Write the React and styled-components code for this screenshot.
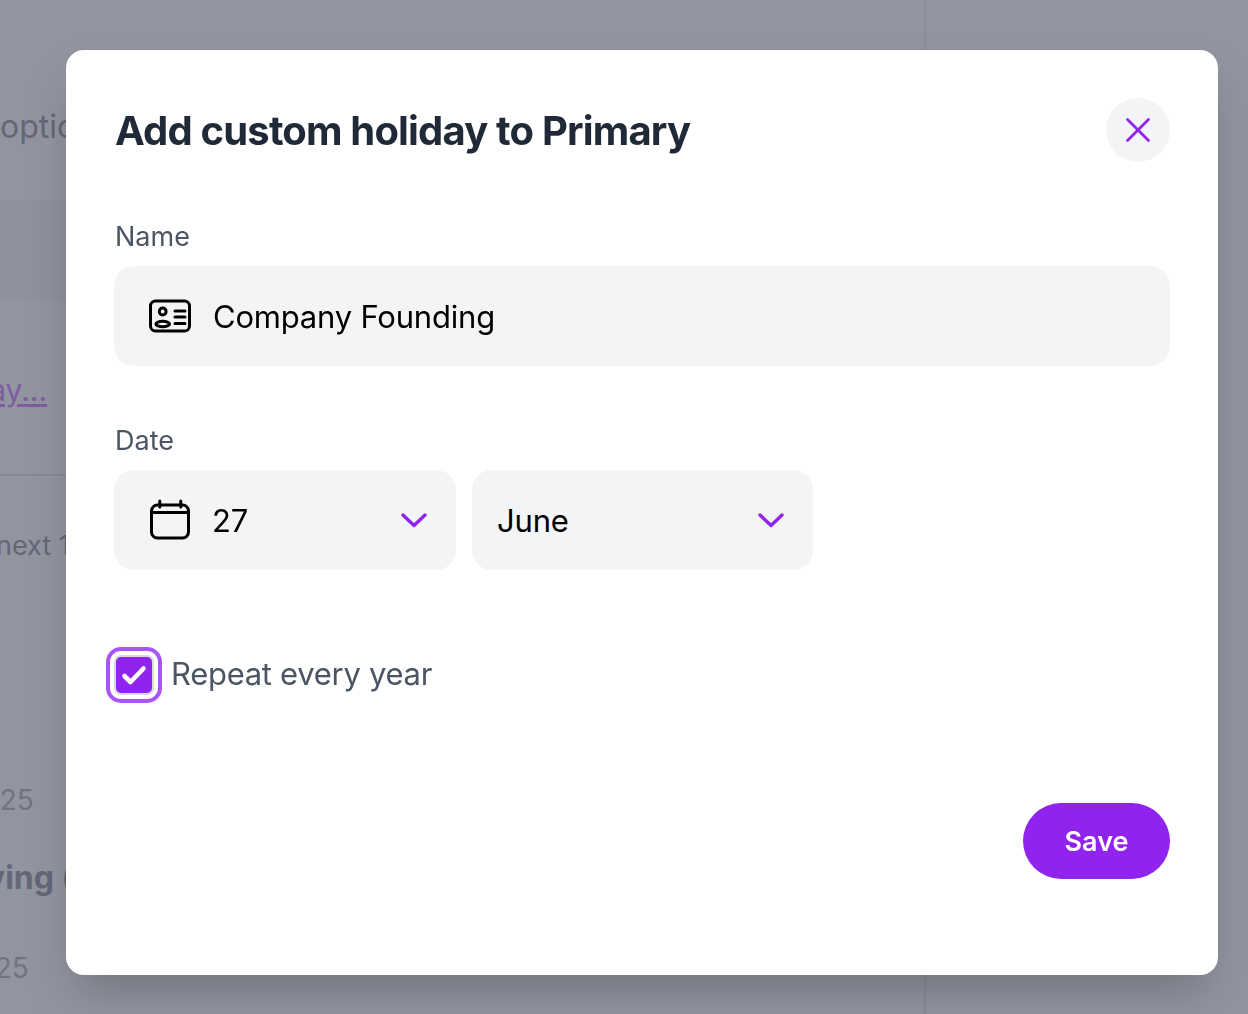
import styled, { createGlobalStyle } from "styled-components";

const GlobalStyle = createGlobalStyle`
  html, body {
    margin: 0;
    height: 100%;
    overflow: hidden;
    background: #fff;
    font-family: Inter, "Liberation Sans", sans-serif;
  }
`;

// page behind the dialog
const Page = styled.div`
  display: flex;
  height: 1014px;
  overflow: hidden;
`;

const Main = styled.main`
  width: 926px;
  box-sizing: border-box;
  flex-shrink: 0;
  border-right: 2px solid #ecedf0;
  overflow: hidden;
`;

const BgText = styled.div`
  height: ${(p) => p.$height}px;
  margin-top: ${(p) => p.$top}px;
  margin-left: ${(p) => p.$shift}px;
  display: flex;
  align-items: center;
  font-size: ${(p) => p.$size || 32}px;
  font-weight: ${(p) => p.$weight || 400};
  color: ${(p) => p.$color || "#a3a3ae"};
  white-space: nowrap;
`;

const BgLink = styled.a`
  color: #d28eff;
  text-decoration: underline;
  text-underline-offset: 3px;
`;

const Band = styled.div`
  height: 100px;
  background: #f8f8fa;
  margin-top: 47px;
`;

const Divider = styled.div`
  height: 2px;
  margin-top: 59px;
  background: #e6e8ec;
`;

// dimming layer
const Overlay = styled.div`
  position: fixed;
  inset: 0;
  background: rgba(37, 43, 66, 0.5);
  padding: 50px 30px 0 66px;
`;

const Modal = styled.div`
  width: 1152px;
  height: 925px;
  box-sizing: border-box;
  background: #fff;
  border-radius: 18px;
  box-shadow: 0 25px 50px -12px rgba(0, 0, 0, 0.25);
  padding: 48px;
  display: flex;
  flex-direction: column;
`;

const Header = styled.div`
  display: flex;
  align-items: center;
  justify-content: space-between;
  height: 64px;
  margin-bottom: 56px;
`;

const Title = styled.h2`
  margin: 0 0 0 1px;
  font-size: 40px;
  font-weight: 700;
  letter-spacing: -0.83px;
  color: #1f2937;
`;

const CloseButton = styled.button`
  width: 64px;
  height: 64px;
  border: 0;
  padding: 0;
  border-radius: 50%;
  background: #f3f4f6;
  display: flex;
  align-items: center;
  justify-content: center;
`;

const Label = styled.div`
  height: 36px;
  line-height: 38px;
  margin: 0 0 12px 1px;
  font-size: 27px;
  color: #4b5563;
`;

const NameField = styled.div`
  height: 100px;
  border-radius: 20px;
  background: #f3f4f6;
  display: flex;
  align-items: center;
  padding-left: 34px;
  gap: 21px;
  margin-bottom: 56px;
`;

const FieldText = styled.span`
  font-size: 31px;
  letter-spacing: -0.2px;
  color: #000;
`;

const DateRow = styled.div`
  display: flex;
  gap: 16px;
  margin-bottom: 85px;
`;

const SelectBox = styled.div`
  width: ${(p) => p.$width}px;
  height: 100px;
  box-sizing: border-box;
  border-radius: 20px;
  background: #f3f4f6;
  display: flex;
  align-items: center;
  gap: 21px;
  padding: 0 29px 0 ${(p) => p.$left}px;
`;

const Chevron = styled.svg`
  margin-left: auto;
`;

const CheckRow = styled.div`
  display: flex;
  align-items: center;
  height: 40px;
  gap: 17px;
`;

const CheckBox = styled.span`
  width: 40px;
  height: 40px;
  box-sizing: border-box;
  border: 2px solid #d8dae0;
  border-radius: 7px;
  background: #9123ee;
  box-shadow: 0 0 0 4px #fff, 0 0 0 8px #a855f7;
  display: flex;
  align-items: center;
  justify-content: center;
`;

const CheckLabel = styled.span`
  font-size: 31px;
  line-height: 38px;
  margin-bottom: 2px;
  letter-spacing: -0.3px;
  color: #4b5563;
`;

const Footer = styled.div`
  display: flex;
  justify-content: flex-end;
  margin-top: 108px;
`;

const SaveButton = styled.button`
  width: 147px;
  height: 76px;
  border: 0;
  border-radius: 38px;
  background: #9123ee;
  color: #fff;
  font-family: inherit;
  font-size: 27px;
  font-weight: 600;
`;

const IdIcon = () => (
  <svg width="44" height="36" viewBox="0 0 44 36" fill="none" stroke="#000" strokeWidth="3" strokeLinecap="round">
    <rect x="2.5" y="3" width="39" height="30" rx="5" />
    <circle cx="14.7" cy="13.5" r="3.4" />
    <ellipse cx="14.7" cy="26" rx="6.8" ry="2.8" />
    <path d="M27 13h10M27 19h10M27 25.5h10" />
  </svg>
);

const CalendarIcon = () => (
  <svg width="42" height="42" viewBox="0 0 42 42" fill="none" stroke="#000" strokeWidth="3" strokeLinecap="round">
    <rect x="2.5" y="6" width="37" height="33" rx="6" />
    <path d="M2.5 13.5h37M10.8 2v6M31.8 2v6" />
  </svg>
);

const ChevronIcon = () => (
  <Chevron width="26" height="16" viewBox="0 0 26 16" fill="none" stroke="#9123ee" strokeWidth="3.4" strokeLinecap="round" strokeLinejoin="round">
    <path d="M2 3l11 10.5L24 3" />
  </Chevron>
);

export default function App() {
  return (
    <>
      <GlobalStyle />
      <Page>
        <Main>
          <BgText $height={54} $top={99} $shift={0}>options</BgText>
          <Band />
          <BgText $height={50} $top={65} $shift={-84} $size={30}>
            <BgLink>Holiday...</BgLink>
          </BgText>
          <Divider />
          <BgText $height={50} $top={44} $shift={-4} $size={27}>next 12 months</BgText>
          <BgText $height={40} $top={210} $shift={-35} $size={28} $color="#b9bac2">2025</BgText>
          <BgText $height={50} $top={32} $shift={-53} $weight={700}>Saving (</BgText>
          <BgText $height={40} $top={46} $shift={-40} $size={28} $color="#b9bac2">2025</BgText>
        </Main>
      </Page>
      <Overlay>
        <Modal>
          <Header>
            <Title>Add custom holiday to Primary</Title>
            <CloseButton aria-label="Close">
              <svg width="26" height="26" viewBox="0 0 26 26" fill="none" stroke="#9123ee" strokeWidth="2.8" strokeLinecap="round">
                <path d="M2.5 2.5l21 21M23.5 2.5l-21 21" />
              </svg>
            </CloseButton>
          </Header>

          <Label>Name</Label>
          <NameField>
            <IdIcon />
            <FieldText>Company Founding</FieldText>
          </NameField>

          <Label>Date</Label>
          <DateRow>
            <SelectBox $width={342} $left={35}>
              <CalendarIcon />
              <FieldText>27</FieldText>
              <ChevronIcon />
            </SelectBox>
            <SelectBox $width={341} $left={25}>
              <FieldText>June</FieldText>
              <ChevronIcon />
            </SelectBox>
          </DateRow>

          <CheckRow>
            <CheckBox>
              <svg width="26" height="22" viewBox="0 0 26 22" fill="none" stroke="#fff" strokeWidth="4.6" strokeLinecap="round" strokeLinejoin="round">
                <path d="M3.5 12l6 6L22.5 4.5" />
              </svg>
            </CheckBox>
            <CheckLabel>Repeat every year</CheckLabel>
          </CheckRow>

          <Footer>
            <SaveButton>Save</SaveButton>
          </Footer>
        </Modal>
      </Overlay>
    </>
  );
}
